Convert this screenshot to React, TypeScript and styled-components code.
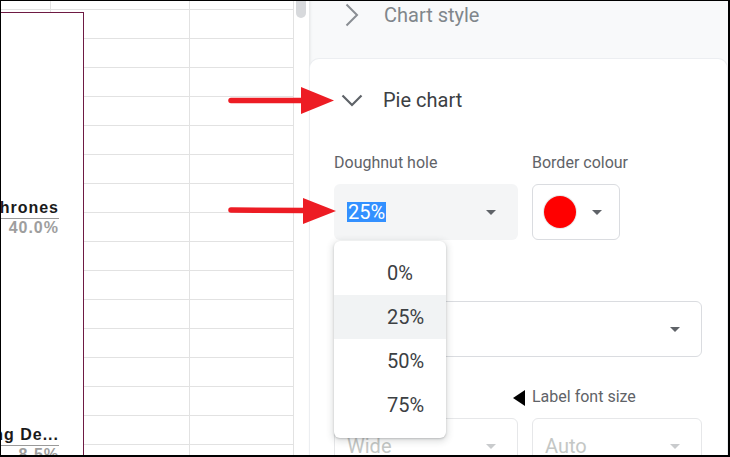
import React from 'react';
import styled, { createGlobalStyle } from 'styled-components';

const Global = createGlobalStyle`
  html, body { margin: 0; padding: 0; background: #fff; }
  * { box-sizing: border-box; }
`;

const Frame = styled.div`
  position: relative;
  width: 730px;
  height: 457px;
  border-top: 1px solid #000;
  border-left: 1px solid #000;
  border-right: 2px solid #000;
  border-bottom: 2px solid #000;
  display: flex;
  overflow: hidden;
  font-family: Roboto, "Noto Sans", sans-serif;
  background: #fff;
`;

/* ---------- sheet ---------- */
const Sheet = styled.div`
  position: relative;
  width: 293px;
  flex: none;
  display: flex;
  flex-direction: column;
  overflow: hidden;
`;

const GridRow = styled.div<{ $h: number }>`
  display: grid;
  grid-template-columns: 50px 139px 104px;
  height: ${(p) => p.$h}px;
  flex: none;
  border-bottom: 1px solid #e2e2e2;
`;

const Cell = styled.div`
  border-right: 1px solid #e2e2e2;
`;

const ChartObject = styled.div`
  position: absolute;
  left: 0;
  top: 11px;
  width: 83px;
  bottom: -40px;
  background: #fff;
  border-top: 1px solid #6e1a43;
  border-right: 1px solid #6e1a43;
  overflow: hidden;
`;

const SliceLabel = styled.div<{ $top: number }>`
  position: absolute;
  left: 0;
  right: 24px;
  top: ${(p) => p.$top}px;
  display: flex;
  flex-direction: column;
  font-family: "Liberation Sans", Arial, sans-serif;
  font-weight: 700;
  font-size: 16px;
  letter-spacing: 1px;
`;

const SliceName = styled.div`
  display: flex;
  justify-content: flex-end;
  white-space: nowrap;
  line-height: 17px;
  padding-bottom: 2px;
  color: #1a1a1a;
  border-bottom: 1px solid #9a9a9a;
`;

const SlicePct = styled.div`
  text-align: right;
  line-height: 17px;
  color: #9e9e9e;
`;

/* ---------- scrollbar ---------- */
const ScrollTrack = styled.div`
  width: 15px;
  flex: none;
  background: #fff;
  padding-left: 2px;
`;

const ScrollThumb = styled.div`
  width: 10px;
  height: 17px;
  background: #d7d9dc;
  border-radius: 0 0 5px 5px;
`;

/* ---------- sidebar ---------- */
const Sidebar = styled.div`
  flex: 1;
  background: #f8f9fa;
  display: flex;
  flex-direction: column;
  padding: 0 1px;
  box-shadow: inset 3px 0 3px -2px rgba(60, 64, 67, 0.12);
`;

const SectionHeader = styled.div<{ $muted?: boolean }>`
  display: flex;
  align-items: center;
  height: 24px;
  font-size: 20px;
  color: ${(p) => (p.$muted ? '#80868b' : '#3c4043')};
`;

const ChartStyleHeader = styled(SectionHeader)`
  margin-top: 2px;
  margin-bottom: 32px;
  padding-left: 35px;
  gap: 25px;
`;

const Card = styled.div`
  flex: 1;
  background: #fff;
  border-radius: 9px 9px 0 0;
  box-shadow: 0 0 0 1px #eceef1, 0 1px 3px rgba(60, 64, 67, 0.08);
  padding: 28px 24px 0 24px;
`;

const PieHeader = styled(SectionHeader)`
  height: 26px;
  padding-left: 7px;
  gap: 20px;
`;

const Fields = styled.div`
  margin-top: 40px;
  display: grid;
  grid-template-columns: 184px 170px;
  column-gap: 14px;
  row-gap: 30px;
`;

const Field = styled.div<{ $span?: boolean }>`
  display: flex;
  flex-direction: column;
  grid-column: ${(p) => (p.$span ? '1 / span 2' : 'auto')};
`;

const Label = styled.div`
  position: relative;
  font-size: 16px;
  line-height: 20px;
  height: 20px;
  color: #5f6368;
  margin-bottom: 11px;
  white-space: nowrap;
`;

const Pointer = styled.span`
  position: absolute;
  left: -19px;
  top: 3px;
  width: 0;
  height: 0;
  border-top: 8px solid transparent;
  border-bottom: 8px solid transparent;
  border-right: 12px solid #000;
`;

const SelectWrap = styled.div`
  position: relative;
`;

type Variant = 'filled' | 'outlined' | 'disabled';

const Select = styled.div<{ $variant: Variant; $w?: number }>`
  height: 56px;
  width: ${(p) => (p.$w ? `${p.$w}px` : '100%')};
  border-radius: 6px;
  display: flex;
  align-items: center;
  justify-content: space-between;
  padding: 0 21px 0 12px;
  font-size: 20px;
  color: ${(p) => (p.$variant === 'disabled' ? '#c4c7c5' : '#3c4043')};
  background: ${(p) => (p.$variant === 'filled' ? '#f4f5f6' : '#fff')};
  border: 1px solid
    ${(p) =>
      p.$variant === 'filled' ? 'transparent' : p.$variant === 'disabled' ? '#e6e7e9' : '#dadce0'};
`;

const ColorSelect = styled(Select)`
  justify-content: flex-start;
  gap: 15px;
  padding: 0 17px 0 11px;
`;

const Swatch = styled.span`
  width: 32px;
  height: 32px;
  border-radius: 50%;
  background: #ff0000;
  box-shadow: 0 0 0 1px #e8e8e8;
`;

const Caret = styled.span<{ $light?: boolean }>`
  margin-left: auto;
  width: 0;
  height: 0;
  border-left: 5px solid transparent;
  border-right: 5px solid transparent;
  border-top: 5px solid ${(p) => (p.$light ? '#c9cbcd' : '#5f6368')};
`;

const Highlight = styled.span`
  background: #3390ff;
  color: #fff;
  line-height: 20px;
  padding: 0 1px;
`;

const Menu = styled.div`
  position: absolute;
  top: calc(100% + 1px);
  left: 0;
  width: 112px;
  padding: 10px 0 11px;
  background: #fff;
  border-radius: 6px;
  box-shadow: 0 2px 6px 2px rgba(60, 64, 67, 0.15), 0 1px 2px rgba(60, 64, 67, 0.25);
  z-index: 5;
`;

const MenuItem = styled.div<{ $active?: boolean }>`
  height: 44px;
  display: flex;
  align-items: center;
  padding-left: 53px;
  font-size: 20px;
  color: #3c4043;
  background: ${(p) => (p.$active ? '#f1f3f4' : 'transparent')};
`;

const Overlay = styled.svg`
  position: absolute;
  left: -1px;
  top: -1px;
  pointer-events: none;
  z-index: 10;
`;

const ChevronRight = () => (
  <svg width="14" height="24" viewBox="0 0 14 24">
    <polyline points="1.5,1.5 12,12 1.5,22.5" fill="none" stroke="#8a8e93" strokeWidth="2" />
  </svg>
);

const ChevronDown = () => (
  <svg width="22" height="13" viewBox="0 0 22 13">
    <polyline points="1.5,1.5 11,11 20.5,1.5" fill="none" stroke="#5f6368" strokeWidth="2.2" />
  </svg>
);

const rowHeights = [9, ...Array.from({ length: 16 }, () => 29)];

export default function App() {
  return (
    <>
      <Global />
      <Frame>
        <Sheet>
          {rowHeights.map((h, i) => (
            <GridRow key={i} $h={h}>
              <Cell />
              <Cell />
              <Cell />
            </GridRow>
          ))}
          <ChartObject>
            <SliceLabel $top={186}>
              <SliceName>Game of Thrones</SliceName>
              <SlicePct>40.0%</SlicePct>
            </SliceLabel>
            <SliceLabel $top={413}>
              <SliceName>The Walking De...</SliceName>
              <SlicePct>8.5%</SlicePct>
            </SliceLabel>
          </ChartObject>
        </Sheet>

        <ScrollTrack>
          <ScrollThumb />
        </ScrollTrack>

        <Sidebar>
          <ChartStyleHeader $muted>
            <ChevronRight />
            <span>Chart style</span>
          </ChartStyleHeader>
          <Card>
            <PieHeader>
              <ChevronDown />
              <span>Pie chart</span>
            </PieHeader>
            <Fields>
              <Field>
                <Label>Doughnut hole</Label>
                <SelectWrap>
                  <Select $variant="filled">
                    <Highlight>25%</Highlight>
                    <Caret />
                  </Select>
                  <Menu>
                    <MenuItem>0%</MenuItem>
                    <MenuItem $active>25%</MenuItem>
                    <MenuItem>50%</MenuItem>
                    <MenuItem>75%</MenuItem>
                  </Menu>
                </SelectWrap>
              </Field>
              <Field>
                <Label>Border colour</Label>
                <ColorSelect $variant="outlined" $w={88}>
                  <Swatch />
                  <Caret />
                </ColorSelect>
              </Field>
              <Field $span>
                <Label />
                <Select $variant="outlined">
                  <Caret />
                </Select>
              </Field>
              <Field>
                <Label />
                <Select $variant="disabled">
                  <span>Wide</span>
                  <Caret $light />
                </Select>
              </Field>
              <Field>
                <Label>
                  <Pointer />
                  Label font size
                </Label>
                <Select $variant="disabled">
                  <span>Auto</span>
                  <Caret $light />
                </Select>
              </Field>
            </Fields>
          </Card>
        </Sidebar>

        <Overlay width="730" height="457" viewBox="0 0 730 457">
          <line x1="231" y1="100.5" x2="305" y2="100.5" stroke="#ed1c24" strokeWidth="5.5" strokeLinecap="round" />
          <polygon points="301,87 334,100.5 301,114" fill="#ed1c24" />
          <line x1="231" y1="210" x2="306" y2="210.5" stroke="#ed1c24" strokeWidth="5.5" strokeLinecap="round" />
          <polygon points="303,198 336,211 303,224" fill="#ed1c24" />
        </Overlay>
      </Frame>
    </>
  );
}
